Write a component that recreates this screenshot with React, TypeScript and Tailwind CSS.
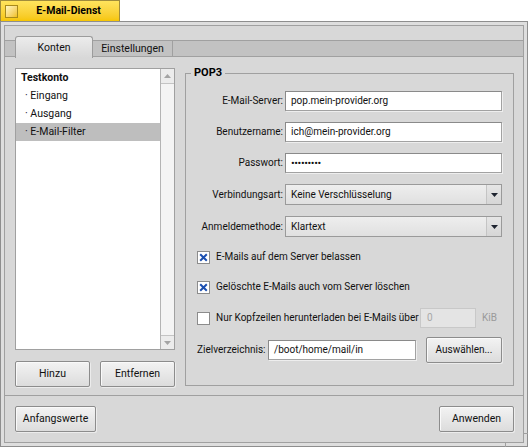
import type { FC, ReactNode } from 'react'
import clsx from 'clsx'

const Btn: FC<{ children: ReactNode; className?: string }> = ({ children, className }) => (
  <button
    className={clsx(
      'h-[26px] rounded-[2px] border border-[#8c8c8c] bg-gradient-to-b from-[#f3f3f3] to-[#dcdcdc] text-[#111] shadow-[inset_1px_1px_0_#fafafa,1px_1px_0_#ececec]',
      className,
    )}
  >
    {children}
  </button>
)

const TextField: FC<{ value: string; className?: string }> = ({ value, className }) => (
  <div
    className={clsx(
      'flex h-[20px] items-center border border-[#a2a2a2] border-t-[#8a8a8a] border-l-[#8a8a8a] bg-white pl-[5px] text-[#111] shadow-[1px_1px_0_#eeeeee]',
      className,
    )}
  >
    {value}
  </div>
)

const Select: FC<{ value: string }> = ({ value }) => (
  <div className="flex h-[21px] items-stretch border border-[#9a9a9a] bg-gradient-to-b from-[#eeeeee] to-[#e0e0e0] text-[#111]">
    <div className="flex flex-1 items-center pl-[5px]">{value}</div>
    <div className="flex w-[15px] items-center justify-center border-l border-[#c4c4c4] bg-gradient-to-b from-[#e6e6e6] to-[#d6d6d6]">
      <svg width="7" height="4" viewBox="0 0 7 4">
        <path d="M0 0h7L3.5 4z" fill="#1e2430" />
      </svg>
    </div>
  </div>
)

const Check: FC<{ checked?: boolean; label: string }> = ({ checked, label }) => (
  <div className="flex shrink-0 items-center gap-[6px] whitespace-nowrap">
    <div className="flex h-[13px] w-[13px] items-center justify-center border border-[#8c8c8c] bg-white">
      {checked && (
        <svg width="9" height="9" viewBox="0 0 9 9">
          <path d="M1.2 1.2l6.6 6.6M7.8 1.2L1.2 7.8" stroke="#1b4fb0" strokeWidth="2" />
        </svg>
      )}
    </div>
    <span>{label}</span>
  </div>
)

export default function App() {
  return (
    <div className="relative h-[447px] w-[528px] overflow-hidden bg-white font-['Roboto','Noto_Sans',sans-serif] text-[10px] leading-none text-[#111]">
      {/* title tab */}
      <div className="flex h-[21px] w-[120px] items-center border border-b-0 border-[#a08c3c] bg-gradient-to-b from-[#ffe45c] to-[#f6c600] pl-[4px]">
        <div className="h-[13px] w-[13px] border border-[#a88a1c] bg-gradient-to-br from-[#fff6c0] to-[#f0c000]" />
        <span className="flex-1 text-center text-[10.5px] font-bold text-black">E-Mail-Dienst</span>
      </div>

      {/* window frame */}
      <div className="relative h-[426px] border border-[#8e8e8e] bg-[#dedede] p-[3px]">
        <div className="h-full border border-[#a0a0a0] bg-[#d8d8d8]">
          {/* tabs */}
          <div className="pt-[14px]">
            <div className="flex h-[17px] border-y border-[#a0a0a0] bg-[#c2c2c2] pl-[10px] text-[10.5px]">
              <div className="mt-[-5px] flex h-[22px] w-[78px] items-center justify-center rounded-t-[3px] border border-b-0 border-[#9c9c9c] bg-gradient-to-b from-[#ececec] to-[#d8d8d8] pt-[1px]">
                Konten
              </div>
              <div className="flex w-[80px] items-center justify-center border-r border-[#a0a0a0] pt-[1px]">
                Einstellungen
              </div>
            </div>
          </div>

          {/* tab content */}
          <div className="flex h-[339px] gap-[10px] border-b border-[#a0a0a0] pl-[10px] pr-[9px] pt-[11px]">
            <div className="flex w-[160px] flex-col">
              <div className="flex h-[282px] border border-[#a0a0a0] bg-white text-[10.5px]">
                <div className="flex flex-1 flex-col">
                  <div className="flex h-[18px] items-center pl-[5px] font-bold">Testkonto</div>
                  <div className="flex h-[18px] items-center pl-[9px]">· Eingang</div>
                  <div className="flex h-[18px] items-center pl-[9px]">· Ausgang</div>
                  <div className="flex h-[18px] items-center bg-[#bebebe] pl-[9px]">· E-Mail-Filter</div>
                </div>
                <div className="flex w-[14px] flex-col border-l border-[#b4b4b4] bg-[#f4f4f4]">
                  <div className="flex h-[15px] items-center justify-center border-b border-[#c4c4c4] bg-[#ececec]">
                    <svg width="7" height="4" viewBox="0 0 7 4">
                      <path d="M0 4L3.5 0 7 4z" fill="#a4a4a4" />
                    </svg>
                  </div>
                  <div className="flex-1" />
                  <div className="flex h-[14px] items-center justify-center border-t border-[#c4c4c4] bg-[#ececec]">
                    <svg width="7" height="4" viewBox="0 0 7 4">
                      <path d="M0 0h7L3.5 4z" fill="#a4a4a4" />
                    </svg>
                  </div>
                </div>
              </div>
              <div className="mt-[11px] flex gap-[10px] text-[10.5px]">
                <Btn className="w-[75px]">Hinzu</Btn>
                <Btn className="w-[75px]">Entfernen</Btn>
              </div>
            </div>

            <fieldset className="h-[318px] w-[329px] border border-[#a0a0a0]">
              <legend className="ml-[5px] px-[3px] text-[11px] leading-[10px] font-bold text-black">POP3</legend>
              <div className="px-[11px] pt-[13px]">
                <div className="grid grid-cols-[86px_1fr] items-center gap-x-[2px] gap-y-[11px]">
                  <span className="text-right">E-Mail-Server:</span>
                  <TextField value="pop.mein-provider.org" />
                  <span className="text-right">Benutzername:</span>
                  <TextField value="ich@mein-provider.org" />
                  <span className="text-right">Passwort:</span>
                  <TextField value="•••••••••" className="text-[11px] tracking-[-0.4px] text-[#4a1010]" />
                  <span className="text-right">Verbindungsart:</span>
                  <Select value="Keine Verschlüsselung" />
                  <span className="text-right">Anmeldemethode:</span>
                  <Select value="Klartext" />
                </div>

                <div className="mt-[10px] flex h-[20px] items-center">
                  <Check checked label="E-Mails auf dem Server belassen" />
                </div>
                <div className="mt-[10px] flex h-[20px] items-center">
                  <Check checked label="Gelöschte E-Mails auch vom Server löschen" />
                </div>
                <div className="mt-[11px] flex h-[20px] items-center whitespace-nowrap">
                  <Check label="Nur Kopfzeilen herunterladen bei E-Mails über" />
                  <div className="ml-auto flex h-[20px] w-[56px] shrink-0 items-center border border-[#c8c8c8] bg-[#e4e4e4] pl-[6px] text-[#a8a8a8]">
                    0
                  </div>
                  <span className="ml-[6px] mr-[5px] text-[#9a9a9a]">KiB</span>
                </div>
                <div className="mt-[10px] flex h-[24px] items-center">
                  <span className="w-[71px] shrink-0 whitespace-nowrap">Zielverzeichnis:</span>
                  <TextField value="/boot/home/mail/in" className="w-[148px]" />
                  <Btn className="ml-[10px] h-[24px] w-[76px]">Auswählen...</Btn>
                </div>
              </div>
            </fieldset>
          </div>

          {/* bottom bar */}
          <div className="flex justify-between pl-[10px] pr-[9px] pt-[10px] text-[10.5px]">
            <Btn className="w-[81px]">Anfangswerte</Btn>
            <Btn className="w-[75px]">Anwenden</Btn>
          </div>
        </div>

        {/* resize corner notches */}
        <div className="absolute bottom-[-1px] right-[21px] h-[4px] w-px bg-[#a0a0a0]" />
        <div className="absolute bottom-[12px] right-[-1px] h-px w-[4px] bg-[#a0a0a0]" />
      </div>
    </div>
  )
}
